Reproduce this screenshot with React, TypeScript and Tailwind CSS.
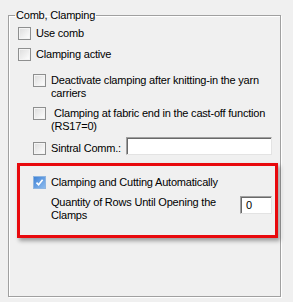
import type { ReactNode } from "react";

function CheckBox({ checked = false }: { checked?: boolean }) {
  if (checked) {
    return (
      <span className="flex h-[13px] w-[13px] shrink-0 items-center justify-center border border-[#8fb5e0] bg-gradient-to-br from-[#3f83d6] to-[#8dbbee]">
        <svg width="9" height="9" viewBox="0 0 9 9">
          <path d="M1.5 4.6 L3.6 6.8 L7.6 1.8" fill="none" stroke="#fff" strokeWidth="1.6" />
        </svg>
      </span>
    );
  }
  return (
    <span className="h-[13px] w-[13px] shrink-0 border border-[#8e8f8f] bg-gradient-to-br from-[#dcdcdc] to-white shadow-[inset_0_0_0_1px_#f4f4f4]" />
  );
}

function SunkenInput({ value = "", className }: { value?: string; className: string }) {
  return (
    <div
      className={
        "h-[18px] shrink-0 border border-t-[#a0a0a0] border-l-[#a0a0a0] border-r-[#e3e3e3] border-b-[#e3e3e3] bg-white pl-[5px] text-[11px] leading-[16px] shadow-[inset_1px_1px_0_#696969] " +
        className
      }
    >
      {value}
    </div>
  );
}

function Row({ checked, children, className }: { checked?: boolean; children: ReactNode; className: string }) {
  return (
    <div className={"flex items-start gap-[5px] " + className}>
      <CheckBox checked={checked} />
      <div className="leading-[13px]">{children}</div>
    </div>
  );
}

export default function App() {
  return (
    <div className="h-[302px] w-[293px] bg-[#f0f0f0] pt-[8px] font-['Liberation_Sans',Arial,sans-serif] text-[11px] tracking-[-0.2px] text-black">
      <fieldset className="ml-[8px] h-[289px] w-[273px] border border-[#a0a0a0] shadow-[inset_1px_1px_0_#fff,1px_1px_0_#fff]">
        <legend className="ml-[6px] px-[1px] leading-[14px]">Comb, Clamping</legend>

        <Row className="ml-[9px] mt-[5px]">Use comb</Row>
        <Row className="ml-[9px] mt-[8px]">Clamping active</Row>

        <Row className="ml-[24px] mt-[13px]">
          Deactivate clamping after knitting-in the yarn
          <br />
          carriers
        </Row>
        <Row className="ml-[24px] mt-[7px]">
          <span className="block pl-[3px]">Clamping at fabric end in the cast-off function</span>
          (RS17=0)
        </Row>

        <div className="ml-[24px] mt-[4px] flex items-start">
          <div className="mt-[5px] flex items-start gap-[5px]">
            <CheckBox />
            <span className="leading-[13px]">Sintral Comm.:</span>
          </div>
          <SunkenInput className="ml-auto mr-[8px] w-[146px]" />
        </div>

        <div className="ml-[8px] mt-[8px] w-[261px] border-[3px] border-[#e8090d] pb-[13px] pt-[10px] shadow-[2px_3px_4px_rgba(0,0,0,0.35)]">
          <Row checked className="ml-[13px]">Clamping and Cutting Automatically</Row>
          <div className="ml-[31px] mt-[7px] flex items-start">
            <div className="leading-[13px]">
              Quantity of Rows Until Opening the
              <br />
              Clamps
            </div>
            <SunkenInput value="0" className="ml-auto mr-[3px] w-[32px]" />
          </div>
        </div>
      </fieldset>
    </div>
  );
}
